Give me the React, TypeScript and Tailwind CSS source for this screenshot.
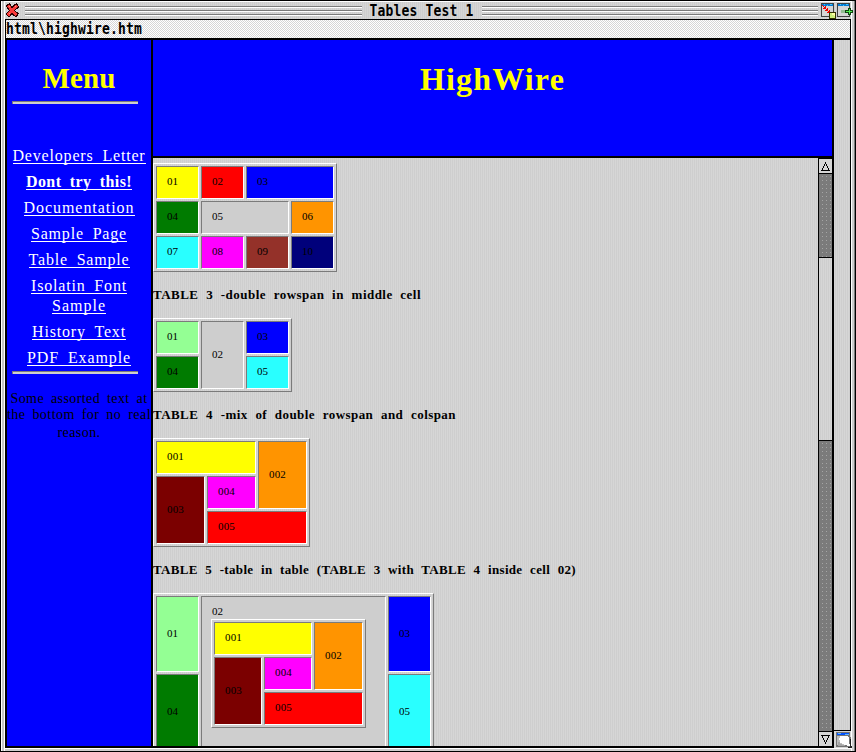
import { useLayoutEffect, useRef, useState, type ReactNode } from 'react';

const PAGE = 'bg-[repeating-linear-gradient(90deg,#d6d6d6_0_1px,#cecece_1px_2px)]';

/** A single line of text whose tracking is spread so that it is `width` pixels wide. */
function Fit({ width, className = '', children }: { width: number; className?: string; children: string }) {
  const ref = useRef<HTMLSpanElement>(null);
  const [tracking, setTracking] = useState(0);
  useLayoutEffect(() => {
    if (ref.current) {
      const natural = ref.current.getBoundingClientRect().width;
      setTracking((t) => t + (width - natural) / children.length);
    }
  }, [width, children]);
  return (
    <span ref={ref} className={`inline-block whitespace-nowrap ${className}`} style={{ letterSpacing: tracking }}>
      {children}
    </span>
  );
}

function Cell({ n, className, children }: { n: string; className: string; children?: ReactNode }) {
  return (
    <div
      className={`flex flex-col border border-t-[#7b7b7b] border-l-[#7b7b7b] border-r-white border-b-white pl-[10px] text-[11px] leading-[14px] ${children ? 'justify-start pt-[7px]' : 'justify-center pb-[3px]'} ${className}`}
    >
      <Fit width={n.length === 2 ? 11 : 17} className="self-start">{n}</Fit>
      {children}
    </div>
  );
}

function Grid({ className, children }: { className: string; children: ReactNode }) {
  return (
    <div
      className={`grid shrink-0 gap-[2px] border border-t-white border-l-white border-r-[#7b7b7b] border-b-[#7b7b7b] p-[2px] ${className}`}
    >
      {children}
    </div>
  );
}

function MixedCells() {
  return (
    <>
      <Cell n="001" className="col-span-2 bg-[#ffff00]" />
      <Cell n="002" className="row-span-2 bg-[#ff9400]" />
      <Cell n="003" className="row-span-2 bg-[#7b0000]" />
      <Cell n="004" className="bg-[#ff00ff]" />
      <Cell n="005" className="col-span-2 bg-[#ff0000]" />
    </>
  );
}

function Caption({ width, children }: { width: number; children: string }) {
  return (
    <div className="h-[46px] shrink-0 pt-[15px] text-[13px] leading-[16px] font-bold">
      <Fit width={width} className="[word-spacing:4px]">{children}</Fit>
    </div>
  );
}

function Rule() {
  return <div className="ml-[5px] h-[3px] w-[126px] shrink-0 border-t border-l border-[#7b7b7b] bg-[#cecece]" />;
}

function MenuLink({ width, className = '', children }: { width: number; className?: string; children: string }) {
  return (
    <a href="#" className={`flex h-[26px] shrink-0 justify-center text-[16px] leading-[20px] text-white ${className}`}>
      <Fit width={width} className="h-[18px] border-b border-white [word-spacing:4px]">{children}</Fit>
    </a>
  );
}

function TitleLines() {
  return (
    <div className="flex h-[10px] flex-1 flex-col justify-between">
      <div className="h-[2px] border-t border-[#7b7b7b] bg-white" />
      <div className="h-[2px] border-t border-[#7b7b7b] bg-white" />
      <div className="h-[2px] border-t border-[#7b7b7b] bg-white" />
    </div>
  );
}

function CloseIcon() {
  return (
    <svg width="15" height="15" viewBox="0 0 15 15" fill="none" strokeLinecap="square" strokeLinejoin="round" shapeRendering="crispEdges">
      <path d="M4 3.5 L6.5 7.2 L10.5 11 M11 3.5 L7.2 7 L4 11" stroke="#290000" strokeWidth="5" />
      <path d="M4 3.5 L6.5 7.2 L10.5 11 M11 3.5 L7.2 7 L4 11" stroke="#f73939" strokeWidth="3" />
      <path d="M4 3 L5 4 M11 3 L10 4 M5 10 L4 11" stroke="#ff8c7b" strokeWidth="1" />
    </svg>
  );
}

function FrameIcon({ kind }: { kind: 'shrink' | 'move' }) {
  return (
    <svg width="16" height="16" viewBox="0 0 16 16" shapeRendering="crispEdges">
      <rect x="0" y="0" width="13" height="14" fill="#424242" />
      <rect x="1" y="1" width="11" height="2" fill="#007bd6" />
      <path d="M3 1h1v1h-1zM6 2h1v1h-1zM9 1h2v1h-2z" fill="#42c6ff" />
      <rect x="1" y="3" width="11" height="10" fill="#d6d6d6" />
      {kind === 'shrink' ? (
        <>
          <path d="M1 2h1v1h1v1h1v-1h1v3h-3v-1h1v-1h-1v-1h-1zM4 5h1v1h1v-1h1v3h-3v-1h1v-1h-1zM6 7h1v1h1v-1h1v3h-3v-1h1v-1h-1z" fill="#f00000" />
          <path d="M8 9h7v7h-7z" fill="#313100" />
          <path d="M9 10h5v5h-5z" fill="#ceef7b" />
          <path d="M11 10h3v3h-1v-1h-2z" fill="#ffffa5" />
        </>
      ) : (
        <>
          <path d="M4 7h6v3h-6z" fill="#94bd94" />
          <path d="M11 5h3v2h2v3h-2v2h-3v-2h-3v-3h3z" fill="#104210" />
          <path d="M12 6h1v2h2v1h-2v2h-1v-2h-3v-1h3z" fill="#52ef52" />
        </>
      )}
    </svg>
  );
}

function SizerIcon() {
  return (
    <svg width="16" height="16" viewBox="0 0 16 16" className="shrink-0" shapeRendering="crispEdges">
      <path d="M0 0h14v5h1v9h1v2h-4v-1h-12z" fill="#737373" />
      <path d="M1 1h12v2h-12z" fill="#0052ff" />
      <path d="M2 1h3v1h-3zM9 2h4v1h-4z" fill="#63b5ff" />
      <path d="M1 4h11v1h1v7h1v2h-2v-1h-11z" fill="#bdbdbd" />
      <path d="M4 4h8v1h1v7h1v2h-3v-1h-3v-1h-2v-1h-2v-3h-1v-2h1z" fill="#ffffff" />
      <path d="M2 10h2v2h2v1h3v1h-7z" fill="#a5a5a5" />
      <path d="M14 7h1v7h1v2h-4v-1h2z" fill="#212121" />
    </svg>
  );
}

function Arrow({ down = false }: { down?: boolean }) {
  return (
    <svg width="9" height="9" viewBox="0 0 9 9" className={down ? 'rotate-180' : ''} shapeRendering="crispEdges">
      <path d="M4 0h1v2h1v2h1v2h1v2h1v1h-9v-1h1v-2h1v-2h1v-2h1zM4 2v2h-1v2h-1v2h5v-2h-1v-2h-1v-2z" fill="#000" fillRule="evenodd" />
    </svg>
  );
}

const TRACK = 'bg-[#7b7b7b] bg-[radial-gradient(circle_at_3.5px_2.5px,#a5a5a5_0.6px,transparent_0.7px)] bg-[length:4px_4px]';

export default function App() {
  return (
    <div className='flex h-[752px] w-[856px] overflow-hidden border border-black bg-[#cecece] font-["Liberation_Serif",serif] text-black'>
      <div className="w-[4px] shrink-0 border-x border-white bg-[#c6c6c6]" />
      <div className="z-10 flex w-[846px] shrink-0 flex-col">
        <header className={`flex h-[18px] shrink-0 items-center border-t border-white ${PAGE}`}>
          <div className="mr-[4px] flex w-[16px]"><CloseIcon /></div>
          <TitleLines />
          <h1 className='flex w-[120px] justify-center font-["DejaVu_Sans_Mono",monospace] text-[13px] leading-[16px] font-bold'>
            <Fit width={104} className="scale-y-[1.25]">Tables Test 1</Fit>
          </h1>
          <TitleLines />
          <div className="-mr-[2px] ml-[3px] flex">
            <FrameIcon kind="shrink" />
            <FrameIcon kind="move" />
          </div>
        </header>

        <div className='flex h-[21px] shrink-0 border border-b-2 border-black bg-[repeating-conic-gradient(#fff_0_25%,#d6d6d6_0_50%)] bg-[length:2px_2px] font-["DejaVu_Sans_Mono",monospace] text-[13px] leading-[18px] font-bold'>
          <Fit width={136} className="scale-y-[1.25]">{'html\\highwire.htm'}</Fit>
        </div>

        <div className="flex h-[708px] shrink-0">
          <main className="flex w-[829px] shrink-0 border-2 border-t-0 border-black">
            <nav className="flex w-[146px] shrink-0 flex-col border-r-2 border-black bg-[#0000ff]">
              <h2 className="flex h-[61px] shrink-0 justify-center pt-[21px] text-[29px] leading-[34px] font-bold text-[#ffff00]">
                <Fit width={73}>Menu</Fit>
              </h2>
              <Rule />
              <div className="mt-[42px] flex flex-col">
                <MenuLink width={133}>Developers Letter</MenuLink>
                <MenuLink width={106} className="font-bold">Dont try this!</MenuLink>
                <MenuLink width={111}>Documentation</MenuLink>
                <MenuLink width={96}>Sample Page</MenuLink>
                <MenuLink width={101}>Table Sample</MenuLink>
                <MenuLink width={96} className="!h-[20px]">Isolatin Font</MenuLink>
                <MenuLink width={54}>Sample</MenuLink>
                <MenuLink width={94}>History Text</MenuLink>
                <MenuLink width={104} className="!h-[23px]">PDF Example</MenuLink>
              </div>
              <Rule />
              <p className="mt-[17px] flex flex-col items-center text-[14px] leading-[16px]">
                <Fit width={137} className="[word-spacing:3px]">Some assorted text at</Fit>
                <Fit width={144} className="[word-spacing:3px]">the bottom for no real</Fit>
                <Fit width={43} className="mt-[2px]">reason.</Fit>
              </p>
            </nav>

            <div className="flex w-[679px] flex-col">
              <div className="flex h-[118px] shrink-0 justify-center border-b-2 border-black bg-[#0000ff] pt-[20px] text-[32px] leading-[38px] font-bold text-[#ffff00]">
                <Fit width={145}>HighWire</Fit>
              </div>
              <div className="flex h-[588px] shrink-0">
                <article className={`flex w-[665px] flex-col items-start overflow-hidden pt-[5px] ${PAGE}`}>
                  <Grid className="auto-rows-[33px] grid-cols-[repeat(4,43px)]">
                    <Cell n="01" className="bg-[#ffff00]" />
                    <Cell n="02" className="bg-[#ff0000]" />
                    <Cell n="03" className="col-span-2 bg-[#0000ff]" />
                    <Cell n="04" className="bg-[#007b00]" />
                    <Cell n="05" className="col-span-2 bg-[#cecece]" />
                    <Cell n="06" className="bg-[#ff9400]" />
                    <Cell n="07" className="bg-[#29ffff]" />
                    <Cell n="08" className="bg-[#ff00ff]" />
                    <Cell n="09" className="bg-[#943129]" />
                    <Cell n="10" className="bg-[#00007b]" />
                  </Grid>
                  <Caption width={268}>TABLE 3 -double rowspan in middle cell</Caption>
                  <Grid className="auto-rows-[33px] grid-cols-[repeat(3,43px)]">
                    <Cell n="01" className="bg-[#94ff94]" />
                    <Cell n="02" className="row-span-2 bg-[#cecece]" />
                    <Cell n="03" className="bg-[#0000ff]" />
                    <Cell n="04" className="bg-[#007b00]" />
                    <Cell n="05" className="bg-[#29ffff]" />
                  </Grid>
                  <Caption width={303}>TABLE 4 -mix of double rowspan and colspan</Caption>
                  <Grid className="auto-rows-[33px] grid-cols-[repeat(3,49px)]">
                    <MixedCells />
                  </Grid>
                  <Caption width={423}>TABLE 5 -table in table (TABLE 3 with TABLE 4 inside cell 02)</Caption>
                  <Grid className="auto-rows-[76px] grid-cols-[43px_185px_43px]">
                    <Cell n="01" className="bg-[#94ff94]" />
                    <Cell n="02" className="row-span-2 bg-[#cecece]">
                      <Grid className="-ml-px mt-[1px] w-[155px] auto-rows-[33px] grid-cols-[48px_48px_49px]">
                        <MixedCells />
                      </Grid>
                    </Cell>
                    <Cell n="03" className="bg-[#0000ff]" />
                    <Cell n="04" className="bg-[#007b00]" />
                    <Cell n="05" className="bg-[#29ffff]" />
                  </Grid>
                </article>
                <div className="flex w-[14px] shrink-0 flex-col border-l border-black">
                  <div className="flex h-[16px] shrink-0 items-center justify-center border-y border-black bg-[#d6d6d6]"><Arrow /></div>
                  <div className={`h-[83px] shrink-0 ${TRACK}`} />
                  <div className={`h-[184px] shrink-0 border-y border-black ${PAGE}`} />
                  <div className={`flex-1 ${TRACK}`} />
                  <div className="flex h-[15px] shrink-0 items-center justify-center border-t border-black bg-[#d6d6d6]"><Arrow down /></div>
                </div>
              </div>
            </div>
          </main>
          <aside className="flex w-[17px] shrink-0 flex-col">
            <div className={`h-[691px] border-r border-b border-black ${PAGE}`} />
            <div className="flex h-[17px] items-start bg-[#d6d6d6] pt-px pl-[2px]"><SizerIcon /></div>
          </aside>
        </div>
        <div className="h-[3px] shrink-0 border-t border-white bg-[#cecece]" />
      </div>
      <div className="w-[4px] border-l border-r border-l-white border-r-[#7b7b7b] bg-[#cecece]" />
    </div>
  );
}
